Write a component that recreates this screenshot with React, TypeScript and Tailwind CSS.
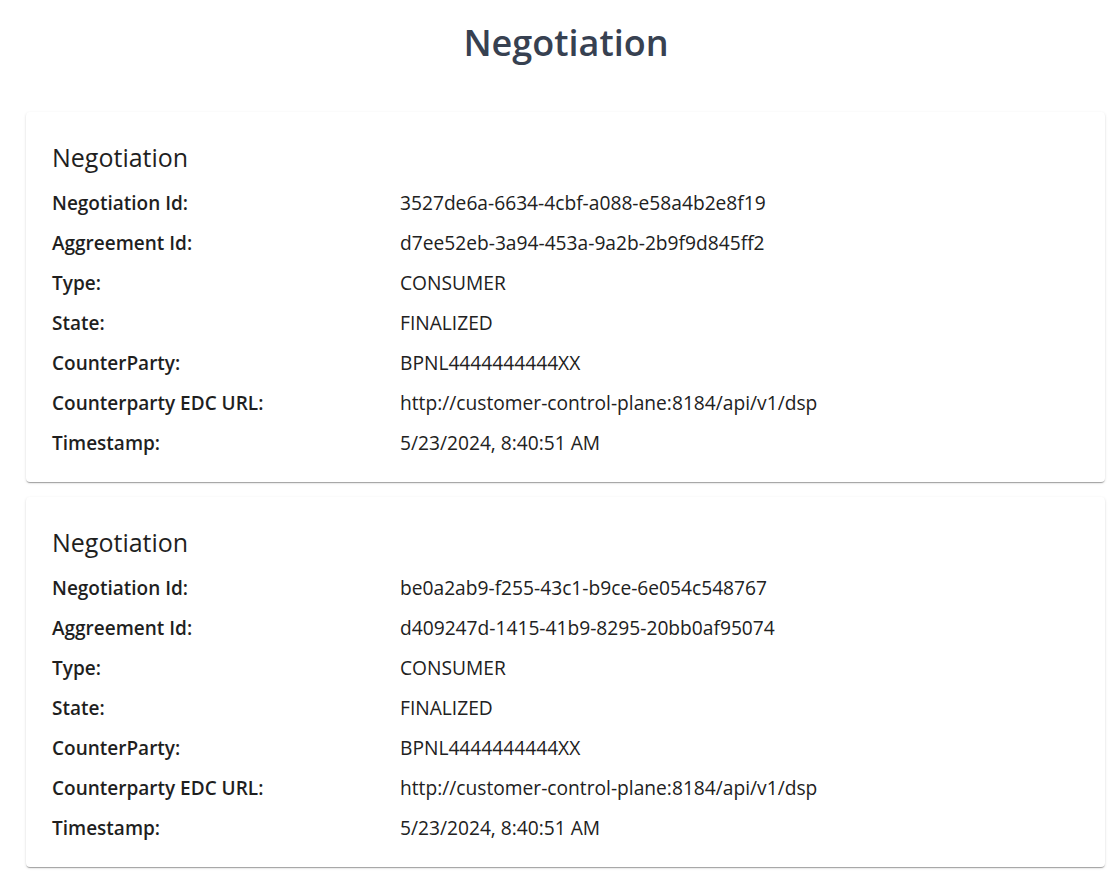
import React from "react";

type Neg = {
  id: string;
  agreement: string;
  type: string;
  state: string;
  counterParty: string;
  url: string;
  timestamp: string;
};

const data: Neg[] = [
  {
    id: "3527de6a-6634-4cbf-a088-e58a4b2e8f19",
    agreement: "d7ee52eb-3a94-453a-9a2b-2b9f9d845ff2",
    type: "CONSUMER",
    state: "FINALIZED",
    counterParty: "BPNL4444444444XX",
    url: "http://customer-control-plane:8184/api/v1/dsp",
    timestamp: "5/23/2024, 8:40:51 AM",
  },
  {
    id: "be0a2ab9-f255-43c1-b9ce-6e054c548767",
    agreement: "d409247d-1415-41b9-8295-20bb0af95074",
    type: "CONSUMER",
    state: "FINALIZED",
    counterParty: "BPNL4444444444XX",
    url: "http://customer-control-plane:8184/api/v1/dsp",
    timestamp: "5/23/2024, 8:40:51 AM",
  },
];

function Row({ label, value }: { label: string; value: string }) {
  return (
    <div className="flex h-[40px] items-center">
      <div className="w-[348px] shrink-0 text-[19px] font-semibold text-[#1f1f1f]">{label}</div>
      <div className="text-[19.2px] text-[#212121]">{value}</div>
    </div>
  );
}

function Card({ n }: { n: Neg }) {
  return (
    <div className="w-[1079px] rounded-[4px] bg-white px-[26px] pt-[26px] pb-[19px] shadow-[0px_2px_1px_-1px_rgba(0,0,0,0.2),0px_1px_1px_0px_rgba(0,0,0,0.14),0px_1px_3px_0px_rgba(0,0,0,0.12)]">
      <h2 className="mb-[7px] text-[25px] leading-[38px] font-medium text-[#1f1f1f]">Negotiation</h2>
      <Row label="Negotiation Id:" value={n.id} />
      <Row label="Aggreement Id:" value={n.agreement} />
      <Row label="Type:" value={n.type} />
      <Row label="State:" value={n.state} />
      <Row label="CounterParty:" value={n.counterParty} />
      <Row label="Counterparty EDC URL:" value={n.url} />
      <Row label="Timestamp:" value={n.timestamp} />
    </div>
  );
}

export default function App() {
  return (
    <div
      className="min-h-[875px] w-[1116px] bg-white"
      style={{ fontFamily: '"Open Sans", "Noto Sans", sans-serif' }}
    >
      <h1 className="flex h-[84px] items-center justify-center pt-[1px] pl-[16px] text-[36px] font-semibold text-[#374151]">
        Negotiation
      </h1>
      <div className="ml-[26px] mt-[28px] flex flex-col gap-[15px]">
        {data.map((n) => (
          <Card key={n.id} n={n} />
        ))}
      </div>
    </div>
  );
}
